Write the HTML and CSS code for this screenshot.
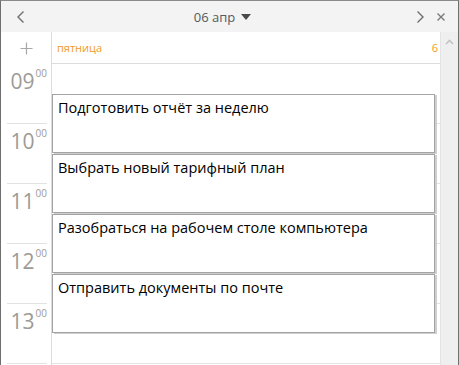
FILE: index.html
```html
<!DOCTYPE html>
<html lang="ru">
<head>
<meta charset="utf-8">
<link rel="stylesheet" href="styles.css">
</head>
<body>
<div class="window">
  <div class="topbar">
    <div class="nav prev">
      <svg width="10" height="14" viewBox="0 0 10 14"><path d="M7.5 1.5 L2 7 L7.5 12.5" fill="none" stroke="#6e6e6e" stroke-width="1.4"/></svg>
    </div>
    <div class="title">06 апр <span class="tri"></span></div>
    <div class="nav next">
      <svg width="10" height="14" viewBox="0 0 10 14"><path d="M2.5 1.5 L8 7 L2.5 12.5" fill="none" stroke="#6e6e6e" stroke-width="1.4"/></svg>
    </div>
    <div class="nav close">
      <svg width="10" height="10" viewBox="0 0 10 10"><path d="M1.5 1.5 L8.5 8.5 M8.5 1.5 L1.5 8.5" fill="none" stroke="#7a7a7a" stroke-width="1.4"/></svg>
    </div>
  </div>
  <div class="body">
    <div class="main">
      <div class="dayrow">
        <div class="corner">
          <svg width="13" height="13" viewBox="0 0 13 13"><path d="M6.5 0.5 V12.5 M0.5 6.5 H12.5" stroke="#a8a8a8" stroke-width="1.2"/></svg>
        </div>
        <div class="dayhead"><span>пятница</span><span>6</span></div>
      </div>
      <div class="grid">
        <div class="hours">
          <div class="hour"><span class="h">09</span><span class="m">00</span></div>
          <div class="hour"><span class="h">10</span><span class="m">00</span></div>
          <div class="hour"><span class="h">11</span><span class="m">00</span></div>
          <div class="hour"><span class="h">12</span><span class="m">00</span></div>
          <div class="hour"><span class="h">13</span><span class="m">00</span></div>
        </div>
        <div class="day">
          <div class="lines">
            <div class="line"></div>
            <div class="line"></div>
            <div class="line"></div>
            <div class="line"></div>
            <div class="line"></div>
          </div>
          <div class="events">
            <div class="event">Подготовить отчёт за неделю</div>
            <div class="event">Выбрать новый тарифный план</div>
            <div class="event">Разобраться на рабочем столе компьютера</div>
            <div class="event">Отправить документы по почте</div>
          </div>
        </div>
      </div>
    </div>
    <div class="scrollbar">
      <svg width="9" height="6" viewBox="0 0 9 6"><path d="M1 5 L4.5 1.5 L8 5" fill="none" stroke="#c4c4c4" stroke-width="1.6"/></svg>
    </div>
  </div>
</div>
</body>
</html>
```

FILE: styles.css
```css
html, body {
  margin: 0;
  padding: 0;
  background: #ffffff;
}
body {
  font-family: "Open Sans", "Noto Sans", sans-serif;
}
.window {
  width: 459px;
  height: 365px;
  box-sizing: border-box;
  border-left: 1px solid #6f6f6f;
  border-right: 1px solid #6f6f6f;
  border-top: 1px solid #8a8a8a;
  overflow: hidden;
  display: flex;
  flex-direction: column;
}
.topbar {
  height: 31px;
  flex: none;
  background: #f3f3f3;
  display: flex;
  align-items: center;
}
.nav {
  display: flex;
  align-items: center;
  justify-content: center;
}
.prev {
  width: 14px;
  margin-left: 13px;
}
.title {
  flex: 1;
  font-size: 13px;
  color: #555a60;
  padding-left: 4px;
  display: flex;
  align-items: center;
  justify-content: center;
  gap: 6px;
}
.tri {
  width: 0;
  height: 0;
  border-left: 5px solid transparent;
  border-right: 5px solid transparent;
  border-top: 6px solid #4a4a4a;
  margin-top: 1px;
}
.next {
  width: 14px;
  margin-right: 8px;
}
.close {
  width: 12px;
  margin-right: 11px;
}
.body {
  flex: 1;
  display: flex;
  min-height: 0;
}
.main {
  width: 440px;
  flex: none;
  display: flex;
  flex-direction: column;
}
.dayrow {
  display: flex;
  height: 32px;
  flex: none;
}
.corner {
  width: 50px;
  border-right: 1px solid #dcdcdc;
  display: flex;
  align-items: center;
  justify-content: center;
}
.dayhead {
  flex: 1;
  border-bottom: 1px solid #dcdcdc;
  border-right: 1px solid #e4e4e4;
  display: flex;
  justify-content: space-between;
  align-items: center;
  padding: 0 2px 0 5px;
  font-size: 11px;
  color: #f39a1e;
}
.grid {
  flex: 1;
  display: flex;
  min-height: 0;
}
.hours {
  width: 50px;
  flex: none;
  border-right: 1px solid #dcdcdc;
  display: flex;
  flex-direction: column;
}
.hour {
  height: 60px;
  flex: none;
  box-sizing: border-box;
  margin: 0 4px 0 6px;
  border-bottom: 1px solid #e2e2e2;
  display: flex;
  justify-content: flex-end;
  align-items: flex-start;
  padding-top: 4px;
  color: #9e9a96;
}
.h {
  font-size: 21px;
  line-height: 24px;
  margin-top: 1px;
}
.m {
  font-size: 10px;
  line-height: 10px;
  margin-left: 1px;
}
.day {
  flex: 1;
  display: grid;
  border-right: 1px solid #e4e4e4;
}
.lines, .events {
  grid-area: 1 / 1;
}
.lines {
  display: flex;
  flex-direction: column;
}
.line {
  height: 60px;
  flex: none;
  box-sizing: border-box;
  border-bottom: 1px solid #e2e2e2;
}
.events {
  padding-top: 30px;
  padding-right: 5px;
  display: flex;
  flex-direction: column;
  gap: 1px;
}
.event {
  height: 59px;
  flex: none;
  box-sizing: border-box;
  border: 1px solid #a3a3a3;
  background: #ffffff;
  box-shadow: 2px 1px 0 #cfcfcf;
  font-size: 14.5px;
  color: #000000;
  padding: 2px 0 0 5px;
  line-height: 21px;
}
.scrollbar {
  flex: 1;
  background: #efefef;
  display: flex;
  justify-content: center;
  align-items: flex-start;
  padding-top: 7px;
}
```
